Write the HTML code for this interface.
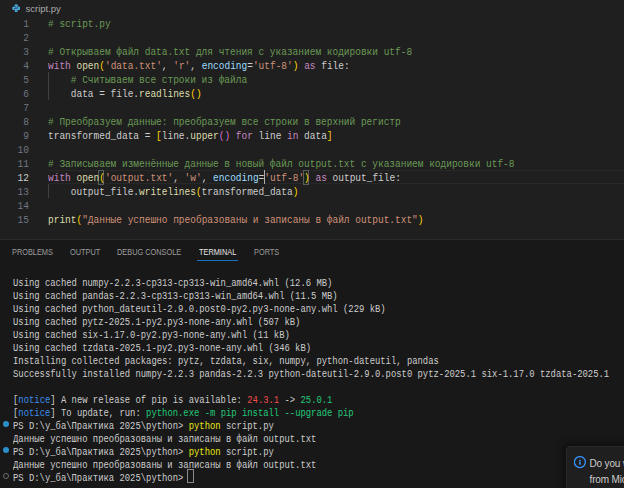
<!DOCTYPE html>
<html><head><meta charset="utf-8">
<style>
html,body{margin:0;padding:0;}
body{width:624px;height:488px;overflow:hidden;position:relative;background:#1f1f1f;font-family:"Liberation Sans",sans-serif;}
.crumb{position:absolute;left:0;top:0;width:624px;height:16px;background:#1f1f1f;}
.crumb .name{position:absolute;left:25.5px;top:1.8px;font-size:9.5px;line-height:14px;color:#a9a9a9;}
.ed{position:absolute;left:0;top:16px;width:624px;height:223px;}
.ln{position:absolute;left:0;width:29px;text-align:right;font-family:"Liberation Mono",monospace;font-size:10px;transform:scaleX(0.9500);transform-origin:100% 0;line-height:14px;height:14px;color:#6e7681;}
.ln.act{color:#cccccc;}
.cl{position:absolute;left:47.7px;font-family:"Liberation Mono",monospace;font-size:10px;transform:scaleX(0.9480);transform-origin:0 0;line-height:14px;height:14px;color:#cccccc;white-space:pre;}
.c{color:#6a9955}.k{color:#c586c0}.f{color:#dcdcaa}.s{color:#ce9178}.p{color:#9cdcfe}.b1{color:#ffd700}.b2{color:#da70d6}
.curline{position:absolute;left:47px;width:577px;top:154px;height:12px;border-top:1px solid #282828;border-bottom:1px solid #282828;}
.guide{position:absolute;left:48px;width:1px;background:#404040;}
.bm{position:absolute;top:154px;height:12.5px;width:3.9px;border:1px solid #5c5c5c;background:rgba(0,100,0,0.1);}
.cursor{position:absolute;top:154px;height:14px;left:263.9px;width:1.6px;background:#aeafad;}
.panel{position:absolute;left:0;top:239px;width:624px;height:249px;background:#181818;border-top:1px solid #2b2b2b;}
.tab{position:absolute;top:7px;font-size:9.5px;line-height:10px;color:#9d9d9d;transform:scaleX(0.775);transform-origin:0 0;white-space:nowrap;}
.tab.act{color:#e7e7e7;}
.tabul{position:absolute;left:197px;top:19.5px;width:41px;height:1.5px;background:#1a70c0;}
.tl{position:absolute;left:12.5px;font-family:"Liberation Mono",monospace;font-size:10px;transform:scaleX(0.8870);transform-origin:0 0;line-height:13px;height:13px;color:#cccccc;white-space:pre;}
.tb{color:#3b8eea}.tr{color:#f14c4c}.tg{color:#23c878}.ty{color:#e5e510}
.dot{position:absolute;left:2.8px;width:6.2px;height:6.2px;border-radius:50%;box-sizing:border-box;}
.tcur{position:absolute;box-sizing:border-box;border:1px solid #8a8a8a;}
.notif{position:absolute;left:566px;top:446px;width:100px;height:60px;background:#1f1f1f;border:1px solid #2b2b2b;border-radius:4px;box-shadow:0 0 8px 2px rgba(0,0,0,0.5);}
.ntext{position:absolute;left:22.5px;font-size:10px;letter-spacing:-0.15px;line-height:15px;color:#cccccc;white-space:nowrap;}
</style></head><body>
<div class="crumb">
<svg style="position:absolute;left:12.2px;top:3.6px" width="8.4" height="8.4" viewBox="0 0 16 16"><g fill="#4aa8de"><path id="pys" d="M5 4V2.6C5 1.2 6.3 0.6 8 0.6C9.7 0.6 10.9 1.2 10.9 2.6V6C10.9 6.8 10.4 7.3 9.6 7.3H6.2C5.3 7.3 4.7 7.9 4.7 8.8V11.4H2.6C1.2 11.4 0.6 10 0.6 8C0.6 6 1.2 4.6 2.6 4.6H8.3V4Z"/><use href="#pys" transform="rotate(180 8 8)"/></g></svg>
<div class="name">script.py</div>
</div>
<div class="ed">
<div class="curline"></div>
<div class="guide" style="top:56px;height:28px"></div>
<div class="guide" style="top:168px;height:14px"></div>
<div class="bm" style="left:98.39px"></div>
<div class="bm" style="left:303.16px"></div>
<div class="ln" style="top:1.5px">1</div>
<div class="ln" style="top:15.5px">2</div>
<div class="ln" style="top:29.5px">3</div>
<div class="ln" style="top:43.5px">4</div>
<div class="ln" style="top:57.5px">5</div>
<div class="ln" style="top:71.5px">6</div>
<div class="ln" style="top:85.5px">7</div>
<div class="ln" style="top:99.5px">8</div>
<div class="ln" style="top:113.5px">9</div>
<div class="ln" style="top:127.5px">10</div>
<div class="ln" style="top:141.5px">11</div>
<div class="ln act" style="top:155.5px">12</div>
<div class="ln" style="top:169.5px">13</div>
<div class="ln" style="top:183.5px">14</div>
<div class="ln" style="top:197.5px">15</div>
<div class="cl" style="top:1.5px"><span class="c"># script.py</span></div>
<div class="cl" style="top:29.5px"><span class="c"># Открываем файл data.txt для чтения с указанием кодировки utf-8</span></div>
<div class="cl" style="top:43.5px"><span class="k">with</span> <span class="f">open</span><span class="b1">(</span><span class="s">'data.txt'</span>, <span class="s">'r'</span>, <span class="p">encoding</span>=<span class="s">'utf-8'</span><span class="b1">)</span> <span class="k">as</span> file:</div>
<div class="cl" style="top:57.5px">    <span class="c"># Считываем все строки из файла</span></div>
<div class="cl" style="top:71.5px">    data = file.<span class="f">readlines</span><span class="b1">()</span></div>
<div class="cl" style="top:99.5px"><span class="c"># Преобразуем данные: преобразуем все строки в верхний регистр</span></div>
<div class="cl" style="top:113.5px">transformed_data = <span class="b1">[</span>line.<span class="f">upper</span><span class="b2">()</span> <span class="k">for</span> line <span class="k">in</span> data<span class="b1">]</span></div>
<div class="cl" style="top:141.5px"><span class="c"># Записываем изменённые данные в новый файл output.txt с указанием кодировки utf-8</span></div>
<div class="cl" style="top:155.5px"><span class="k">with</span> <span class="f">open</span><span class="b1">(</span><span class="s">'output.txt'</span>, <span class="s">'w'</span>, <span class="p">encoding</span>=<span class="s">'utf-8'</span><span class="b1">)</span> <span class="k">as</span> output_file:</div>
<div class="cl" style="top:169.5px">    output_file.<span class="f">writelines</span><span class="b1">(</span>transformed_data<span class="b1">)</span></div>
<div class="cl" style="top:197.5px"><span class="f">print</span><span class="b1">(</span><span class="s">"Данные успешно преобразованы и записаны в файл output.txt"</span><span class="b1">)</span></div>
<div class="cursor"></div>
</div>
<div class="panel">
<div class="tab" style="left:12px">PROBLEMS</div>
<div class="tab" style="left:69.5px">OUTPUT</div>
<div class="tab" style="left:117px">DEBUG CONSOLE</div>
<div class="tab act" style="left:198.5px">TERMINAL</div>
<div class="tab" style="left:254px">PORTS</div>
<div class="tabul"></div>
<div class="tl" style="top:36.5px">Using cached numpy-2.2.3-cp313-cp313-win_amd64.whl (12.6 MB)</div>
<div class="tl" style="top:49.5px">Using cached pandas-2.2.3-cp313-cp313-win_amd64.whl (11.5 MB)</div>
<div class="tl" style="top:62.5px">Using cached python_dateutil-2.9.0.post0-py2.py3-none-any.whl (229 kB)</div>
<div class="tl" style="top:75.5px">Using cached pytz-2025.1-py2.py3-none-any.whl (507 kB)</div>
<div class="tl" style="top:88.5px">Using cached six-1.17.0-py2.py3-none-any.whl (11 kB)</div>
<div class="tl" style="top:101.5px">Using cached tzdata-2025.1-py2.py3-none-any.whl (346 kB)</div>
<div class="tl" style="top:114.5px">Installing collected packages: pytz, tzdata, six, numpy, python-dateutil, pandas</div>
<div class="tl" style="top:127.5px">Successfully installed numpy-2.2.3 pandas-2.2.3 python-dateutil-2.9.0.post0 pytz-2025.1 six-1.17.0 tzdata-2025.1</div>
<div class="tl" style="top:153.5px">[<span class="tb">notice</span>] A new release of pip is available: <span class="tr">24.3.1</span> -&gt; <span class="tg">25.0.1</span></div>
<div class="tl" style="top:166.5px">[<span class="tb">notice</span>] To update, run: <span class="tg">python.exe -m pip install --upgrade pip</span></div>
<div class="tl" style="top:179.5px">PS D:\у_ба\Практика 2025\python&gt; <span class="ty">python</span> script.py</div>
<div class="tl" style="top:192.5px">Данные успешно преобразованы и записаны в файл output.txt</div>
<div class="tl" style="top:205.5px">PS D:\у_ба\Практика 2025\python&gt; <span class="ty">python</span> script.py</div>
<div class="tl" style="top:218.5px">Данные успешно преобразованы и записаны в файл output.txt</div>
<div class="tl" style="top:231.5px">PS D:\у_ба\Практика 2025\python&gt; </div>
<div class="dot" style="top:181.2px;background:#2b8fca"></div>
<div class="dot" style="top:207.2px;background:#2b8fca"></div>
<div class="dot" style="top:233.2px;border:1.2px solid #6a6a6a"></div>
<div class="tcur" style="left:187.33px;top:229px;width:6.5px;height:14px"></div>
</div>
<div class="notif">
<svg style="position:absolute;left:7px;top:9px" width="13" height="13" viewBox="0 0 13 13"><circle cx="5.9" cy="6.1" r="5.5" fill="none" stroke="#3794ff" stroke-width="1.3"/><rect x="5.1" y="5.6" width="1.6" height="3.1" fill="#3794ff"/><rect x="5.1" y="3.9" width="1.6" height="1.2" fill="#3794ff"/></svg>
<div class="ntext" style="top:9px">Do you want to install</div>
<div class="ntext" style="top:25px">from Microsoft</div>
</div>
</body></html>
